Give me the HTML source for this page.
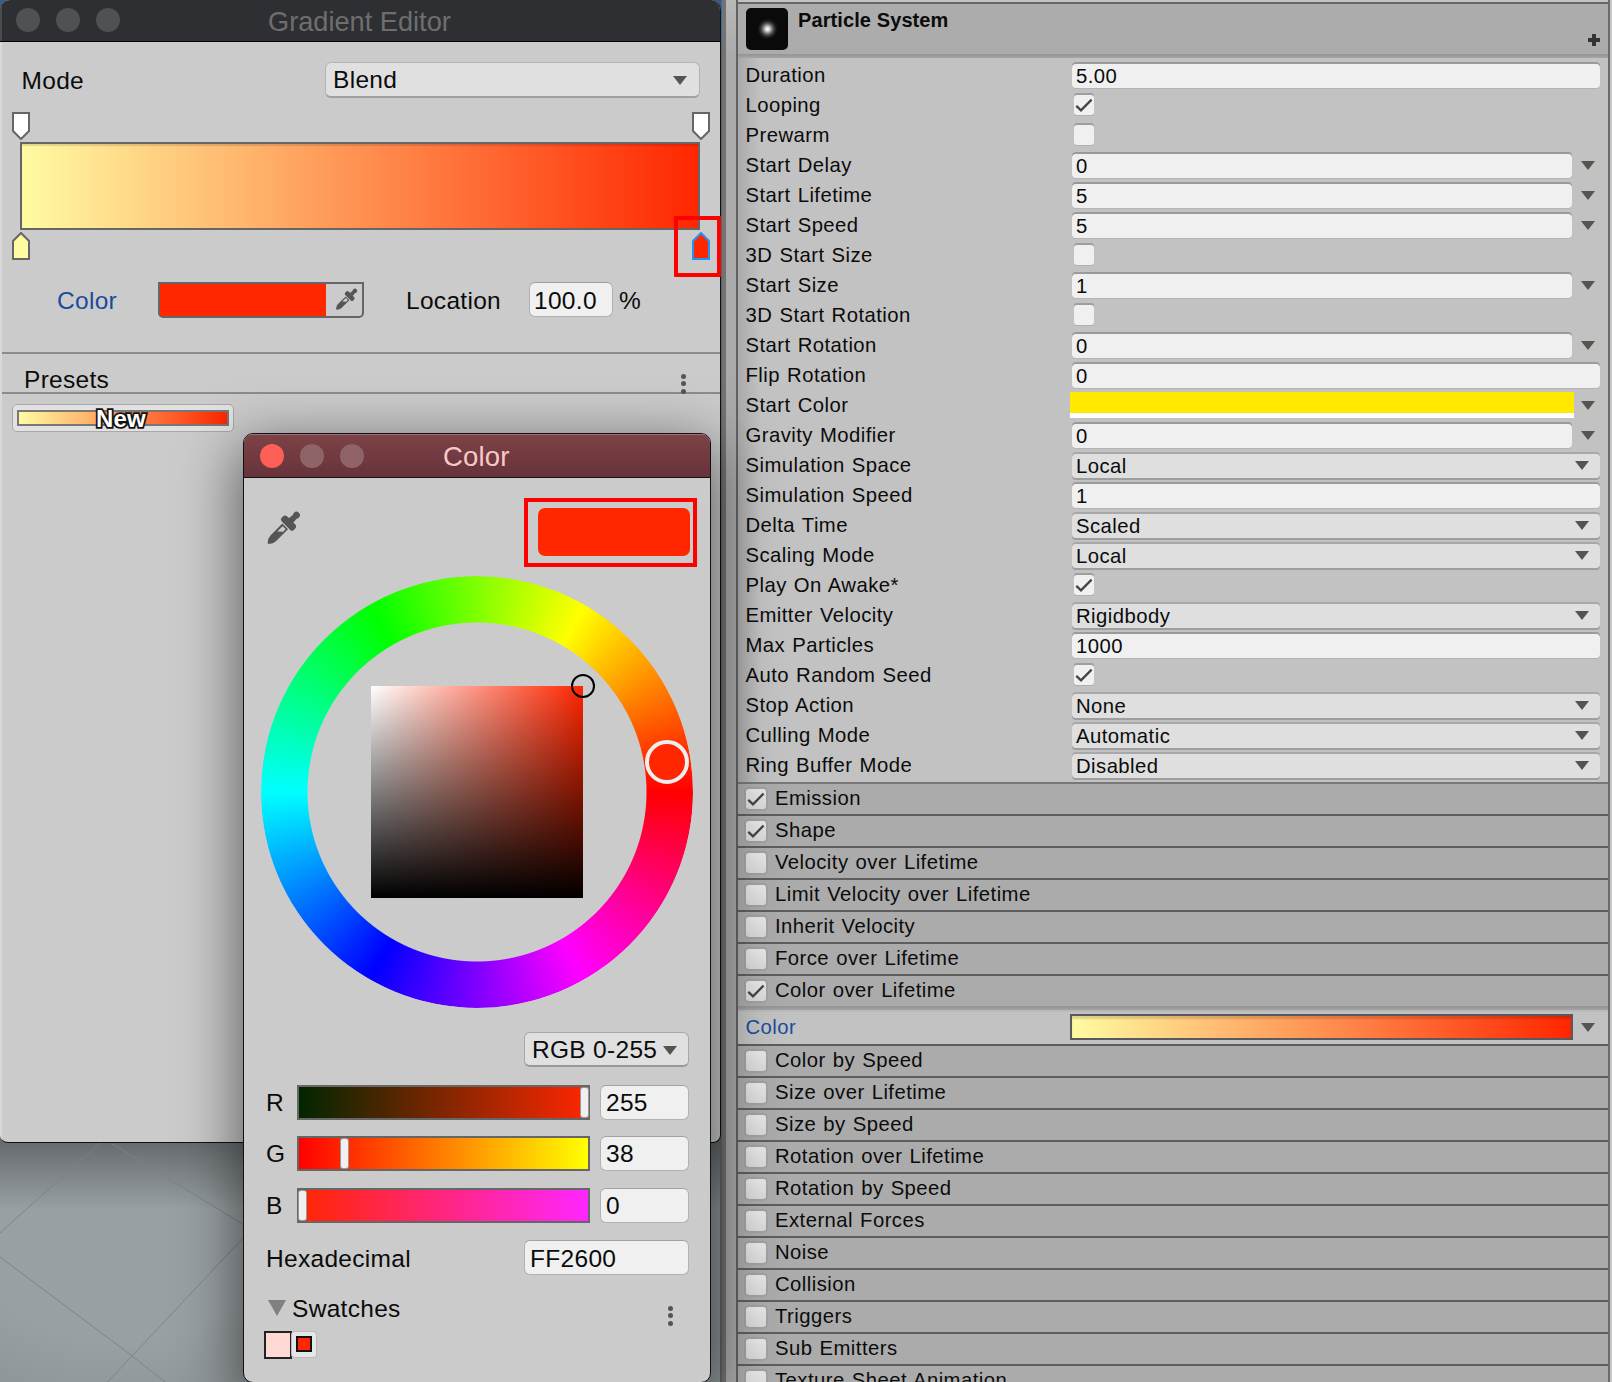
<!DOCTYPE html><html><head><meta charset="utf-8"><style>
*{box-sizing:border-box}
html,body{margin:0;padding:0}
body{width:1612px;height:1382px;overflow:hidden;position:relative;background:#c2c2c2;font-family:"Liberation Sans",sans-serif;color:#0b0b0b}
.a{position:absolute}
.t{position:absolute;white-space:pre;line-height:1}
.lbl{font-size:20.3px;letter-spacing:0.45px;word-spacing:1px}
.fld{position:absolute;background:#f0f0f0;border-radius:4px;box-shadow:0 -2px 0 #9a9a9a, 0 1px 0 #b4b4b4}
.enm{position:absolute;background:#dfdfdf;border-radius:4px;box-shadow:0 -2px 0 #a8a8a8, 0 2px 0 #9e9e9e}
.cb{position:absolute;width:20px;height:20px;background:#f0f0f0;border-radius:3px;box-shadow:0 -2px 0 #9e9e9e,0 1px 0 #b0b0b0}
.arr{position:absolute;width:0;height:0;border-left:7px solid transparent;border-right:7px solid transparent;border-top:9px solid #55554f}
.hdr{position:absolute;left:738px;width:870px;height:32px;background:#ababab;border-top:2px solid #5e5e5e}
.hcb{position:absolute;width:20px;height:20px;border-radius:3px;background:linear-gradient(#e8e8e8,#d9d9d9);box-shadow:0 0 0 2px #a2a2a2}
</style></head><body>
<div class="a" style="left:720px;top:0;width:892px;height:1382px;background:#c2c2c2"></div>
<div class="a" style="left:720px;top:0;width:2px;height:1382px;background:#5a6468"></div>
<div class="a" style="left:721px;top:0;width:1px;height:42px;background:#3d6a9a"></div>
<div class="a" style="left:722px;top:0;width:4px;height:1382px;background:#737373"></div>
<div class="a" style="left:726px;top:0;width:10px;height:1382px;background:linear-gradient(#b8b8b8,#aaaaaa 60px)"></div>
<div class="a" style="left:736px;top:0;width:2px;height:1382px;background:#626262"></div>
<div class="a" style="left:1608px;top:0;width:2px;height:1382px;background:#6a6a6a"></div>
<div class="a" style="left:1610px;top:0;width:2px;height:1382px;background:#c8c8c8"></div>
<div class="a" style="left:738px;top:0;width:24px;height:1382px;background:linear-gradient(90deg,rgba(0,0,0,0.12),rgba(0,0,0,0))"></div>
<div class="a" style="left:738px;top:0;width:870px;height:4px;background:#c2c2c2"></div>
<div class="a" style="left:738px;top:2px;width:870px;height:2px;background:#666"></div>
<div class="a" style="left:738px;top:4px;width:870px;height:50px;background:#acacac"></div>
<div class="a" style="left:738px;top:54px;width:870px;height:4px;background:linear-gradient(#939393,#a6a6a6)"></div>
<div class="a" style="left:746px;top:8px;width:42px;height:42px;border-radius:5px;background:radial-gradient(circle at 21.5px 21px,#fff 0,#e8e8e8 1.5px,#a0a0a0 3.5px,#4a4a4a 6px,#181818 8.5px,#0a0a0a 10.5px)"></div>
<div class="t" style="left:798px;top:10px;font-size:20px;font-weight:bold;letter-spacing:0.1px">Particle System</div>
<div class="a" style="left:1588px;top:38px;width:12px;height:4px;background:#333"></div>
<div class="a" style="left:1592px;top:34px;width:4px;height:12px;background:#333"></div>
<div class="t lbl" style="left:745.5px;top:65px">Duration</div>
<div class="fld" style="left:1072px;top:64px;width:528px;height:24px"></div>
<div class="t lbl" style="left:1076px;top:66px">5.00</div>
<div class="t lbl" style="left:745.5px;top:95px">Looping</div>
<div class="cb" style="left:1074px;top:95px"><svg class="a" style="left:0;top:0" width="20" height="20" viewBox="0 0 20 20"><path d="M2.3 10.8 L7 15.3 L17.6 4.6" fill="none" stroke="#444" stroke-width="2.3"/></svg></div>
<div class="t lbl" style="left:745.5px;top:125px">Prewarm</div>
<div class="cb" style="left:1074px;top:125px"></div>
<div class="t lbl" style="left:745.5px;top:155px">Start Delay</div>
<div class="fld" style="left:1072px;top:154px;width:500px;height:24px"></div>
<div class="t lbl" style="left:1076px;top:156px">0</div>
<div class="arr" style="left:1581px;top:161px"></div>
<div class="t lbl" style="left:745.5px;top:185px">Start Lifetime</div>
<div class="fld" style="left:1072px;top:184px;width:500px;height:24px"></div>
<div class="t lbl" style="left:1076px;top:186px">5</div>
<div class="arr" style="left:1581px;top:191px"></div>
<div class="t lbl" style="left:745.5px;top:215px">Start Speed</div>
<div class="fld" style="left:1072px;top:214px;width:500px;height:24px"></div>
<div class="t lbl" style="left:1076px;top:216px">5</div>
<div class="arr" style="left:1581px;top:221px"></div>
<div class="t lbl" style="left:745.5px;top:245px">3D Start Size</div>
<div class="cb" style="left:1074px;top:245px"></div>
<div class="t lbl" style="left:745.5px;top:275px">Start Size</div>
<div class="fld" style="left:1072px;top:274px;width:500px;height:24px"></div>
<div class="t lbl" style="left:1076px;top:276px">1</div>
<div class="arr" style="left:1581px;top:281px"></div>
<div class="t lbl" style="left:745.5px;top:305px">3D Start Rotation</div>
<div class="cb" style="left:1074px;top:305px"></div>
<div class="t lbl" style="left:745.5px;top:335px">Start Rotation</div>
<div class="fld" style="left:1072px;top:334px;width:500px;height:24px"></div>
<div class="t lbl" style="left:1076px;top:336px">0</div>
<div class="arr" style="left:1581px;top:341px"></div>
<div class="t lbl" style="left:745.5px;top:365px">Flip Rotation</div>
<div class="fld" style="left:1072px;top:364px;width:528px;height:24px"></div>
<div class="t lbl" style="left:1076px;top:366px">0</div>
<div class="t lbl" style="left:745.5px;top:395px">Start Color</div>
<div class="a" style="left:1070px;top:392px;width:504px;height:21px;background:#ffe900"></div>
<div class="a" style="left:1070px;top:413px;width:504px;height:5px;background:#fff"></div>
<div class="arr" style="left:1581px;top:401px"></div>
<div class="t lbl" style="left:745.5px;top:425px">Gravity Modifier</div>
<div class="fld" style="left:1072px;top:424px;width:500px;height:24px"></div>
<div class="t lbl" style="left:1076px;top:426px">0</div>
<div class="arr" style="left:1581px;top:431px"></div>
<div class="t lbl" style="left:745.5px;top:455px">Simulation Space</div>
<div class="enm" style="left:1072px;top:454px;width:528px;height:24px"></div>
<div class="t lbl" style="left:1076px;top:456px">Local</div>
<div class="arr" style="left:1575px;top:461px"></div>
<div class="t lbl" style="left:745.5px;top:485px">Simulation Speed</div>
<div class="fld" style="left:1072px;top:484px;width:528px;height:24px"></div>
<div class="t lbl" style="left:1076px;top:486px">1</div>
<div class="t lbl" style="left:745.5px;top:515px">Delta Time</div>
<div class="enm" style="left:1072px;top:514px;width:528px;height:24px"></div>
<div class="t lbl" style="left:1076px;top:516px">Scaled</div>
<div class="arr" style="left:1575px;top:521px"></div>
<div class="t lbl" style="left:745.5px;top:545px">Scaling Mode</div>
<div class="enm" style="left:1072px;top:544px;width:528px;height:24px"></div>
<div class="t lbl" style="left:1076px;top:546px">Local</div>
<div class="arr" style="left:1575px;top:551px"></div>
<div class="t lbl" style="left:745.5px;top:575px">Play On Awake*</div>
<div class="cb" style="left:1074px;top:575px"><svg class="a" style="left:0;top:0" width="20" height="20" viewBox="0 0 20 20"><path d="M2.3 10.8 L7 15.3 L17.6 4.6" fill="none" stroke="#444" stroke-width="2.3"/></svg></div>
<div class="t lbl" style="left:745.5px;top:605px">Emitter Velocity</div>
<div class="enm" style="left:1072px;top:604px;width:528px;height:24px"></div>
<div class="t lbl" style="left:1076px;top:606px">Rigidbody</div>
<div class="arr" style="left:1575px;top:611px"></div>
<div class="t lbl" style="left:745.5px;top:635px">Max Particles</div>
<div class="fld" style="left:1072px;top:634px;width:528px;height:24px"></div>
<div class="t lbl" style="left:1076px;top:636px">1000</div>
<div class="t lbl" style="left:745.5px;top:665px">Auto Random Seed</div>
<div class="cb" style="left:1074px;top:665px"><svg class="a" style="left:0;top:0" width="20" height="20" viewBox="0 0 20 20"><path d="M2.3 10.8 L7 15.3 L17.6 4.6" fill="none" stroke="#444" stroke-width="2.3"/></svg></div>
<div class="t lbl" style="left:745.5px;top:695px">Stop Action</div>
<div class="enm" style="left:1072px;top:694px;width:528px;height:24px"></div>
<div class="t lbl" style="left:1076px;top:696px">None</div>
<div class="arr" style="left:1575px;top:701px"></div>
<div class="t lbl" style="left:745.5px;top:725px">Culling Mode</div>
<div class="enm" style="left:1072px;top:724px;width:528px;height:24px"></div>
<div class="t lbl" style="left:1076px;top:726px">Automatic</div>
<div class="arr" style="left:1575px;top:731px"></div>
<div class="t lbl" style="left:745.5px;top:755px">Ring Buffer Mode</div>
<div class="enm" style="left:1072px;top:754px;width:528px;height:24px"></div>
<div class="t lbl" style="left:1076px;top:756px">Disabled</div>
<div class="arr" style="left:1575px;top:761px"></div>
<div class="hdr" style="top:782px;border-top-color:#787878"></div>
<div class="hcb" style="left:746px;top:789px"><svg class="a" style="left:0;top:0" width="20" height="20" viewBox="0 0 20 20"><path d="M2.3 10.8 L7 15.3 L17.6 4.6" fill="none" stroke="#444" stroke-width="2.3"/></svg></div>
<div class="t lbl" style="left:775px;top:788px">Emission</div>
<div class="hdr" style="top:814px"></div>
<div class="hcb" style="left:746px;top:821px"><svg class="a" style="left:0;top:0" width="20" height="20" viewBox="0 0 20 20"><path d="M2.3 10.8 L7 15.3 L17.6 4.6" fill="none" stroke="#444" stroke-width="2.3"/></svg></div>
<div class="t lbl" style="left:775px;top:820px">Shape</div>
<div class="hdr" style="top:846px"></div>
<div class="hcb" style="left:746px;top:853px"></div>
<div class="t lbl" style="left:775px;top:852px">Velocity over Lifetime</div>
<div class="hdr" style="top:878px"></div>
<div class="hcb" style="left:746px;top:885px"></div>
<div class="t lbl" style="left:775px;top:884px">Limit Velocity over Lifetime</div>
<div class="hdr" style="top:910px"></div>
<div class="hcb" style="left:746px;top:917px"></div>
<div class="t lbl" style="left:775px;top:916px">Inherit Velocity</div>
<div class="hdr" style="top:942px"></div>
<div class="hcb" style="left:746px;top:949px"></div>
<div class="t lbl" style="left:775px;top:948px">Force over Lifetime</div>
<div class="hdr" style="top:974px"></div>
<div class="hcb" style="left:746px;top:981px"><svg class="a" style="left:0;top:0" width="20" height="20" viewBox="0 0 20 20"><path d="M2.3 10.8 L7 15.3 L17.6 4.6" fill="none" stroke="#444" stroke-width="2.3"/></svg></div>
<div class="t lbl" style="left:775px;top:980px">Color over Lifetime</div>
<div class="a" style="left:738px;top:1006px;width:870px;height:38px;background:#c2c2c2"></div>
<div class="a" style="left:738px;top:1006px;width:870px;height:4px;background:linear-gradient(#939393,#a3a3a3)"></div>
<div class="a" style="left:738px;top:1010px;width:870px;height:2px;background:#bababa"></div>
<div class="t lbl" style="left:745.5px;top:1017px;color:#1a4c9a">Color</div>
<div class="a" style="left:1070px;top:1014px;width:503px;height:26px;border:2px solid #5a5a5e;background:linear-gradient(90deg,#fffba2,#ff2600);box-shadow:inset 0 3px 2px rgba(0,0,0,0.14)"></div>
<div class="arr" style="left:1581px;top:1023px"></div>
<div class="hdr" style="top:1044px"></div>
<div class="hcb" style="left:746px;top:1051px"></div>
<div class="t lbl" style="left:775px;top:1050px">Color by Speed</div>
<div class="hdr" style="top:1076px"></div>
<div class="hcb" style="left:746px;top:1083px"></div>
<div class="t lbl" style="left:775px;top:1082px">Size over Lifetime</div>
<div class="hdr" style="top:1108px"></div>
<div class="hcb" style="left:746px;top:1115px"></div>
<div class="t lbl" style="left:775px;top:1114px">Size by Speed</div>
<div class="hdr" style="top:1140px"></div>
<div class="hcb" style="left:746px;top:1147px"></div>
<div class="t lbl" style="left:775px;top:1146px">Rotation over Lifetime</div>
<div class="hdr" style="top:1172px"></div>
<div class="hcb" style="left:746px;top:1179px"></div>
<div class="t lbl" style="left:775px;top:1178px">Rotation by Speed</div>
<div class="hdr" style="top:1204px"></div>
<div class="hcb" style="left:746px;top:1211px"></div>
<div class="t lbl" style="left:775px;top:1210px">External Forces</div>
<div class="hdr" style="top:1236px"></div>
<div class="hcb" style="left:746px;top:1243px"></div>
<div class="t lbl" style="left:775px;top:1242px">Noise</div>
<div class="hdr" style="top:1268px"></div>
<div class="hcb" style="left:746px;top:1275px"></div>
<div class="t lbl" style="left:775px;top:1274px">Collision</div>
<div class="hdr" style="top:1300px"></div>
<div class="hcb" style="left:746px;top:1307px"></div>
<div class="t lbl" style="left:775px;top:1306px">Triggers</div>
<div class="hdr" style="top:1332px"></div>
<div class="hcb" style="left:746px;top:1339px"></div>
<div class="t lbl" style="left:775px;top:1338px">Sub Emitters</div>
<div class="hdr" style="top:1364px"></div>
<div class="hcb" style="left:746px;top:1371px"></div>
<div class="t lbl" style="left:775px;top:1370px">Texture Sheet Animation</div>
<div class="a" style="left:0;top:1100px;width:720px;height:282px;background:linear-gradient(rgba(40,44,46,0.45) 42px,rgba(40,44,46,0) 110px),radial-gradient(ellipse 260px 200px at 120px 120px,rgba(0,0,0,0),rgba(0,0,0,0) 60%,rgba(0,0,0,0.08) 100%),#99a0a3"></div>
<svg class="a" style="left:0;top:1100px" width="720" height="282"><g stroke="#7c8285" stroke-width="0.9" fill="none"><path d="M0 133 L100 43"/><path d="M111 43 L260 135"/><path d="M0 157 L131 255 L200 310"/><path d="M260 120 L100 290"/></g></svg>
<div class="a" style="left:0;top:0;width:721px;height:42px;background:#3d5a80"></div>
<div class="a" style="left:0;top:0;width:721px;height:1143px;background:#cbcbcb;border-radius:10px 10px 8px 8px;border-right:1px solid #111;border-bottom:1px solid #111;overflow:hidden">
<div class="a" style="left:0;top:0;width:720px;height:41px;background:#2e2f32"></div>
<div class="a" style="left:0;top:41px;width:720px;height:1px;background:#000"></div>
<div class="a" style="left:0;top:0;width:2px;height:41px;background:#4a4b4e"></div>
<div class="a" style="left:0;top:42px;width:2px;height:1100px;background:#d9d9d9"></div>
<div class="a" style="left:16px;top:8px;width:24px;height:24px;border-radius:50%;background:#505154"></div>
<div class="a" style="left:56px;top:8px;width:24px;height:24px;border-radius:50%;background:#505154"></div>
<div class="a" style="left:96px;top:8px;width:24px;height:24px;border-radius:50%;background:#505154"></div>
<div class="t" style="left:268px;top:8px;font-size:27.2px;color:#6e6e70;letter-spacing:0px">Gradient Editor</div>
</div>
<div class="t" style="left:21.5px;top:69px;font-size:24.5px;letter-spacing:0.3px">Mode</div>
<div class="a" style="left:324.5px;top:62px;width:375px;height:35.5px;background:#e0e0e0;border:1.5px solid #b4b4b4;border-bottom:2px solid #a0a0a0;border-radius:6px"></div>
<div class="t" style="left:333px;top:68px;font-size:24.5px;letter-spacing:0.3px">Blend</div>
<div class="arr" style="left:673px;top:76px;border-left-width:7px;border-right-width:7px;border-top-width:9px"></div>
<svg class="a" style="left:12px;top:112px" width="18" height="28" viewBox="0 0 18 28"><path d="M1 1 H17 V19 L9 27 L1 19 Z" fill="#fff" stroke="#666" stroke-width="2"/></svg>
<svg class="a" style="left:692px;top:112px" width="18" height="28" viewBox="0 0 18 28"><path d="M1 1 H17 V19 L9 27 L1 19 Z" fill="#fff" stroke="#666" stroke-width="2"/></svg>
<div class="a" style="left:20px;top:142px;width:680px;height:88px;border:2px solid #666;background:linear-gradient(90deg,#fffba2,#ff2600);box-shadow:inset 0 2px 1px rgba(0,0,0,0.12)"></div>
<svg class="a" style="left:12px;top:232px" width="18" height="28" viewBox="0 0 18 28"><path d="M1 27 H17 V9 L9 1 L1 9 Z" fill="#fffba2" stroke="#666" stroke-width="2"/></svg>
<svg class="a" style="left:692px;top:232px" width="18" height="28" viewBox="0 0 18 28"><path d="M1 27 H17 V9 L9 1 L1 9 Z" fill="#ff2600" stroke="#2293f8" stroke-width="2"/></svg>
<div class="a" style="left:674px;top:216px;width:47px;height:61px;border:4.5px solid #ff0000;border-radius:1px"></div>
<div class="t" style="left:57px;top:289px;font-size:24.5px;color:#1a4c9a;letter-spacing:0.3px">Color</div>
<div class="a" style="left:158px;top:282px;width:206px;height:36px;border:2px solid #666;border-radius:0 0 5px 5px;background:#cbcbcb"></div>
<div class="a" style="left:160px;top:284px;width:166px;height:32px;background:#ff2600"></div>
<svg class="a" style="left:330px;top:284px" width="34" height="30"><g fill="#555" transform="translate(26.5,5.3) rotate(45) scale(0.655)"><circle cx="0" cy="3.4" r="3.4"/><path d="M-2.4 4 L2.4 4 L3.2 11.5 L-3.2 11.5 Z"/><path d="M-5.5 10.9 L5.5 10.9 Q8.6 10.9 8.6 14 L8.6 15.8 Q8.6 18.3 6.1 18.3 L-6.1 18.3 Q-8.6 18.3 -8.6 15.8 L-8.6 14 Q-8.6 10.9 -5.5 10.9 Z"/><path fill-rule="evenodd" d="M-4 19.4 L4 19.4 L4 36.5 Q4 40 0.6 43.6 L-0.6 43.6 Q-4 40 -4 36.5 Z M-2 21 L2.2 21 L2.4 24.6 L-2 28.6 Z"/></g></svg>
<div class="t" style="left:406px;top:289px;font-size:24.5px;letter-spacing:0.3px">Location</div>
<div class="a" style="left:529px;top:282px;width:84px;height:35px;background:#f0f0f0;border-radius:6px;border:1.5px solid #b0b0b0;border-top-color:#a0a0a0"></div>
<div class="t" style="left:534px;top:289px;font-size:24.5px;letter-spacing:0.3px">100.0</div>
<div class="t" style="left:619px;top:289px;font-size:24.5px">%</div>
<div class="a" style="left:2px;top:352px;width:718px;height:2px;background:#8c8c8c"></div>
<div class="t" style="left:24px;top:368px;font-size:24.5px;letter-spacing:0.3px">Presets</div>
<div class="a" style="left:2px;top:392px;width:718px;height:2px;background:#8c8c8c"></div>
<div class="a" style="left:681.4px;top:374px;width:5px;height:5px;border-radius:50%;background:#555"></div>
<div class="a" style="left:681.4px;top:381.4px;width:5px;height:5px;border-radius:50%;background:#555"></div>
<div class="a" style="left:681.4px;top:388.8px;width:5px;height:5px;border-radius:50%;background:#555"></div>
<div class="a" style="left:12px;top:404px;width:222px;height:28px;background:#e2e2e2;border:1px solid #a8a8a8;border-radius:5px"></div>
<div class="a" style="left:17px;top:410px;width:212px;height:16px;border:2px solid #777;background:linear-gradient(90deg,#fffba2,#ff2600)"></div>
<div class="t" style="left:96px;top:407px;font-size:24px;font-weight:bold;color:#fff;-webkit-text-stroke:3.5px #111;paint-order:stroke fill;letter-spacing:0.2px">New</div>
<div class="a" style="left:243px;top:433px;width:468px;height:950px;background:#cbcbcb;border:1px solid #111;border-radius:10px;box-shadow:0 16px 60px 4px rgba(0,0,0,0.55);overflow:hidden">
<div class="a" style="left:0;top:0;width:468px;height:43px;background:linear-gradient(#7d4347,#66333a)"></div>
<div class="a" style="left:0;top:0;width:468px;height:1px;background:#a27076"></div>
<div class="a" style="left:0;top:43px;width:468px;height:1px;background:#111"></div>
</div>
<div class="a" style="left:260px;top:444px;width:24px;height:24px;border-radius:50%;background:#fe5f57"></div>
<div class="a" style="left:300px;top:444px;width:24px;height:24px;border-radius:50%;background:#8f6466"></div>
<div class="a" style="left:340px;top:444px;width:24px;height:24px;border-radius:50%;background:#8f6466"></div>
<div class="t" style="left:443px;top:443px;font-size:27.5px;color:#f8c8c8;letter-spacing:0.2px">Color</div>
<svg class="a" style="left:260px;top:505px" width="50" height="45"><g fill="#555" transform="translate(38.9,7.7) rotate(45) scale(1)"><circle cx="0" cy="3.4" r="3.4"/><path d="M-2.4 4 L2.4 4 L3.2 11.5 L-3.2 11.5 Z"/><path d="M-5.5 10.9 L5.5 10.9 Q8.6 10.9 8.6 14 L8.6 15.8 Q8.6 18.3 6.1 18.3 L-6.1 18.3 Q-8.6 18.3 -8.6 15.8 L-8.6 14 Q-8.6 10.9 -5.5 10.9 Z"/><path fill-rule="evenodd" d="M-4 19.4 L4 19.4 L4 36.5 Q4 40 0.6 43.6 L-0.6 43.6 Q-4 40 -4 36.5 Z M-2 21 L2.2 21 L2.4 24.6 L-2 28.6 Z"/></g></svg>
<div class="a" style="left:524px;top:498px;width:173px;height:69px;border:4px solid #ff0000"></div>
<div class="a" style="left:538px;top:508px;width:152px;height:48px;border-radius:7px;background:#ff2600"></div>
<div class="a" style="left:261px;top:576px;width:432px;height:432px;border-radius:50%;background:conic-gradient(from 90deg,#f00,#f0f,#00f,#0ff,#0f0,#ff0,#f00);-webkit-mask:radial-gradient(circle,transparent 169px,#000 170px);mask:radial-gradient(circle,transparent 169px,#000 170px)"></div>
<div class="a" style="left:371px;top:686px;width:212px;height:212px;background:linear-gradient(to top,#000,rgba(0,0,0,0)),linear-gradient(90deg,#fff,#ff2600)"></div>
<div class="a" style="left:571px;top:674px;width:24px;height:24px;border-radius:50%;border:2.5px solid #000"></div>
<div class="a" style="left:645px;top:740px;width:44px;height:44px;border-radius:50%;border:4px solid #eee;background:#ff2600"></div>
<div class="a" style="left:524px;top:1032px;width:165px;height:35px;background:#e0e0e0;border:1.5px solid #a8a8a8;border-bottom:2px solid #999;border-radius:6px"></div>
<div class="t" style="left:532px;top:1038px;font-size:24.5px;letter-spacing:0.3px">RGB 0-255</div>
<div class="arr" style="left:663px;top:1046px;border-left-width:7px;border-right-width:7px;border-top-width:9px"></div>
<div class="t" style="left:266px;top:1091px;font-size:24.5px">R</div>
<div class="a" style="left:297px;top:1085px;width:293px;height:35px;border:2px solid #666;background:linear-gradient(90deg,#002600,#ff2600)"></div>
<div class="a" style="left:581px;top:1088px;width:7px;height:29px;background:#f0f0f0;border-radius:2px;box-shadow:0 0 0 1px #999"></div>
<div class="a" style="left:600px;top:1085px;width:89px;height:35px;background:#f0f0f0;border-radius:6px;border:1.5px solid #b2b2b2;border-top-color:#a2a2a2"></div>
<div class="t" style="left:606px;top:1091px;font-size:24.5px;letter-spacing:0.3px">255</div>
<div class="t" style="left:266px;top:1142px;font-size:24.5px">G</div>
<div class="a" style="left:297px;top:1136px;width:293px;height:35px;border:2px solid #666;background:linear-gradient(90deg,#ff0000,#ffff00)"></div>
<div class="a" style="left:341px;top:1139px;width:7px;height:29px;background:#f0f0f0;border-radius:2px;box-shadow:0 0 0 1px #999"></div>
<div class="a" style="left:600px;top:1136px;width:89px;height:35px;background:#f0f0f0;border-radius:6px;border:1.5px solid #b2b2b2;border-top-color:#a2a2a2"></div>
<div class="t" style="left:606px;top:1142px;font-size:24.5px;letter-spacing:0.3px">38</div>
<div class="t" style="left:266px;top:1194px;font-size:24.5px">B</div>
<div class="a" style="left:297px;top:1188px;width:293px;height:35px;border:2px solid #666;background:linear-gradient(90deg,#ff2600,#ff26ff)"></div>
<div class="a" style="left:299px;top:1191px;width:7px;height:29px;background:#f0f0f0;border-radius:2px;box-shadow:0 0 0 1px #999"></div>
<div class="a" style="left:600px;top:1188px;width:89px;height:35px;background:#f0f0f0;border-radius:6px;border:1.5px solid #b2b2b2;border-top-color:#a2a2a2"></div>
<div class="t" style="left:606px;top:1194px;font-size:24.5px;letter-spacing:0.3px">0</div>
<div class="t" style="left:266px;top:1247px;font-size:24.5px;letter-spacing:0.3px">Hexadecimal</div>
<div class="a" style="left:524px;top:1240px;width:165px;height:35px;background:#f0f0f0;border-radius:6px;border:1.5px solid #b2b2b2;border-top-color:#a2a2a2"></div>
<div class="t" style="left:530px;top:1247px;font-size:24.5px;letter-spacing:0.3px">FF2600</div>
<div class="a" style="left:268px;top:1300px;width:0;height:0;border-left:9px solid transparent;border-right:9px solid transparent;border-top:16px solid #808080"></div>
<div class="t" style="left:292px;top:1297px;font-size:24.5px;letter-spacing:0.3px">Swatches</div>
<div class="a" style="left:667.5px;top:1306px;width:5px;height:5px;border-radius:50%;background:#555"></div>
<div class="a" style="left:667.5px;top:1313.3px;width:5px;height:5px;border-radius:50%;background:#555"></div>
<div class="a" style="left:667.5px;top:1321px;width:5px;height:5px;border-radius:50%;background:#555"></div>
<div class="a" style="left:264px;top:1331px;width:28px;height:28px;background:#ffdad5;border:2px solid #222"></div>
<div class="a" style="left:292px;top:1332px;width:24px;height:25px;background:#e6e6e6;border-radius:3px;box-shadow:0 0 0 1px #bbb"></div>
<div class="a" style="left:296px;top:1336px;width:16px;height:16px;background:#ff2600;border:2px solid #111"></div>
</body></html>
